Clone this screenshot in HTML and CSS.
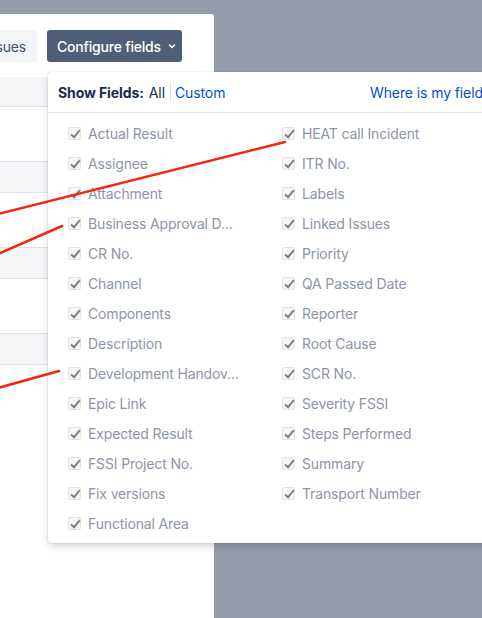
FILE: index.html
```html
<!DOCTYPE html>
<html lang="en">
<head>
<meta charset="utf-8">
<title>Configure fields</title>
<link rel="stylesheet" href="styles.css">
</head>
<body>
<div class="page">
  <div class="panel">
    <div class="toolbar">
      <button class="btn btn-light">Issues</button>
      <button class="btn btn-dark"><span class="btn-label">Configure fields</span>
        <svg class="chev" width="12" height="16" viewBox="2 0 12 16"><path d="M5.5 7 L8 9.5 L10.5 7" fill="none" stroke="#fff" stroke-width="1.6" stroke-linecap="round" stroke-linejoin="round"/></svg>
      </button>
    </div>
    <div class="table">
      <div class="row head"></div>
      <div class="row tall"></div>
      <div class="row band"></div>
      <div class="row tall"></div>
      <div class="row band"></div>
      <div class="row tall"></div>
      <div class="row band"></div>
    </div>
  </div>

  <div class="dropdown">
    <div class="dd-head">
      <span class="dd-title">Show Fields:</span>
      <span class="dd-all">All</span>
      <span class="dd-sep"></span>
      <a class="dd-link">Custom</a>
      <a class="dd-link dd-where">Where is my field?</a>
    </div>
    <div class="dd-list">
      <label class="item"><span class="cb"></span>Actual Result</label>
      <label class="item"><span class="cb"></span>Assignee</label>
      <label class="item"><span class="cb"></span>Attachment</label>
      <label class="item"><span class="cb"></span>Business Approval D...</label>
      <label class="item"><span class="cb"></span>CR No.</label>
      <label class="item"><span class="cb"></span>Channel</label>
      <label class="item"><span class="cb"></span>Components</label>
      <label class="item"><span class="cb"></span>Description</label>
      <label class="item"><span class="cb"></span>Development Handov...</label>
      <label class="item"><span class="cb"></span>Epic Link</label>
      <label class="item"><span class="cb"></span>Expected Result</label>
      <label class="item"><span class="cb"></span>FSSI Project No.</label>
      <label class="item"><span class="cb"></span>Fix versions</label>
      <label class="item"><span class="cb"></span>Functional Area</label>
      <label class="item"><span class="cb"></span>HEAT call Incident</label>
      <label class="item"><span class="cb"></span>ITR No.</label>
      <label class="item"><span class="cb"></span>Labels</label>
      <label class="item"><span class="cb"></span>Linked Issues</label>
      <label class="item"><span class="cb"></span>Priority</label>
      <label class="item"><span class="cb"></span>QA Passed Date</label>
      <label class="item"><span class="cb"></span>Reporter</label>
      <label class="item"><span class="cb"></span>Root Cause</label>
      <label class="item"><span class="cb"></span>SCR No.</label>
      <label class="item"><span class="cb"></span>Severity FSSI</label>
      <label class="item"><span class="cb"></span>Steps Performed</label>
      <label class="item"><span class="cb"></span>Summary</label>
      <label class="item"><span class="cb"></span>Transport Number</label>
    </div>
  </div>

  <svg class="annotations" width="482" height="618" viewBox="0 0 482 618">
    <g stroke="#f4260f" stroke-width="2.6" stroke-linecap="round">
      <line x1="-2" y1="214" x2="285" y2="142"/>
      <line x1="-2" y1="254" x2="62" y2="226"/>
      <line x1="-2" y1="388" x2="59" y2="371"/>
    </g>
  </svg>
</div>
</body>
</html>
```

FILE: styles.css
```css
* { box-sizing: border-box; }

html, body {
  margin: 0;
  padding: 0;
}

body {
  background: #959ba9;
  font-family: Inter, "Noto Sans", "Liberation Sans", sans-serif;
  font-size: 14px;
  overflow: hidden;
}

.page {
  position: relative;
  width: 482px;
  height: 618px;
  overflow: hidden;
}

.panel {
  margin-top: 14px;
  width: 214px;
  height: 604px;
  background: #fff;
  border-top-right-radius: 3px;
  overflow: hidden;
}

.toolbar {
  display: flex;
  justify-content: flex-end;
  gap: 10px;
  padding: 16px 32px 0 0;
  height: 48px;
}

.btn {
  height: 32px;
  border: 0;
  border-radius: 3px;
  font-family: inherit;
  font-size: 14px;
  display: flex;
  align-items: center;
  flex-shrink: 0;
  padding: 0 11px;
  white-space: nowrap;
  letter-spacing: -0.2px;
}

.btn-light {
  background: #f4f5f7;
  color: #42526e;
}

.btn-dark {
  width: 135px;
  background: #505f79;
  color: #fff;
  font-weight: 500;
  padding: 0 0 0 10px;
  gap: 5px;
}

.btn-label {
  white-space: nowrap;
}

.chev { flex-shrink: 0; }

.table {
  margin-top: 15px;
}

.row {
  border-bottom: 1px solid #dfe1e6;
}
.row.head {
  height: 30px;
  background: #f4f5f7;
}
.row.tall {
  height: 55px;
  background: #fff;
}
.row.band {
  height: 31px;
  background: #f4f5f7;
}

.dropdown {
  position: absolute;
  left: 48px;
  top: 72px;
  width: 458px;
  background: #fff;
  border-radius: 3px;
  box-shadow: 0 4px 8px -2px rgba(9, 30, 66, 0.25), 0 0 1px rgba(9, 30, 66, 0.4);
  padding-bottom: 5px;
}

.dd-head {
  height: 41px;
  display: flex;
  align-items: center;
  padding: 0 16px 0 10px;
  border-bottom: 1px solid #dfe1e6;
  color: #172b4d;
  letter-spacing: -0.1px;
}

.dd-title {
  font-weight: 700;
}

.dd-all {
  margin-left: 5px;
}

.dd-sep {
  width: 1px;
  height: 20px;
  background: #dfe1e6;
  margin: 0 4px 0 5px;
}

.dd-link {
  color: #0052cc;
}

.dd-where {
  margin-left: auto;
}

.dd-list {
  display: grid;
  grid-template-rows: repeat(14, 30px);
  grid-template-columns: 214px 214px;
  grid-auto-flow: column;
  padding: 5px 0 0 20px;
}

.item {
  display: flex;
  align-items: center;
  gap: 7px;
  color: #8d95a6;
  white-space: nowrap;
  letter-spacing: -0.15px;
}

.cb {
  position: relative;
  width: 13px;
  height: 13px;
  border: 1px solid #e3e3e3;
  background: #f7f7f7;
  border-radius: 2px;
  flex-shrink: 0;
}

.cb::after {
  content: "";
  position: absolute;
  left: 4px;
  top: 0px;
  width: 3px;
  height: 8px;
  border-right: 2px solid #7f7f7f;
  border-bottom: 2px solid #7f7f7f;
  transform: rotate(40deg);
}

.annotations {
  position: absolute;
  left: 0;
  top: 0;
  pointer-events: none;
}
```
